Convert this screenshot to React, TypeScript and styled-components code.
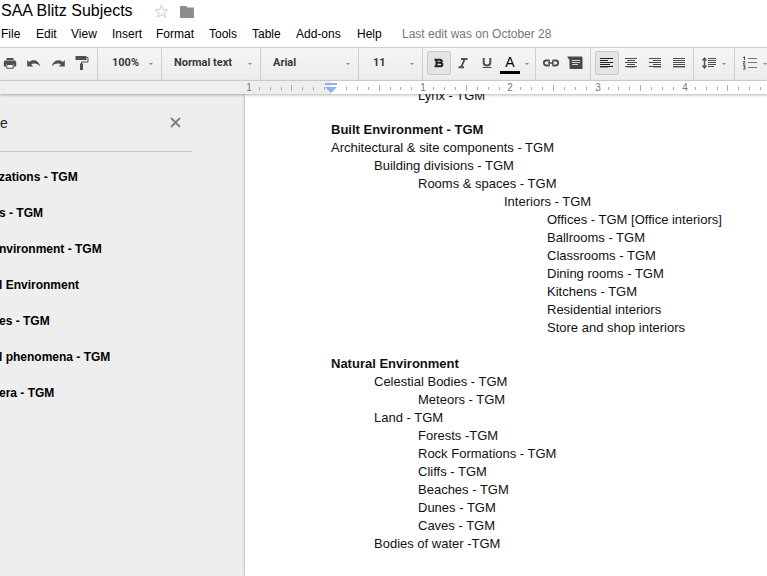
import React from "react";
import styled, { createGlobalStyle } from "styled-components";

const Global = createGlobalStyle`
  * { box-sizing: border-box; }
  body { margin: 0; background: #eee; color: #000; font-family: "Liberation Sans", Arial, sans-serif; }
  button { font: inherit; color: inherit; cursor: pointer; }
`;

const Shell = styled.div`
  height: 100vh;
  display: flex;
  flex-direction: column;
  overflow: hidden;
`;
const Header = styled.header`
  background: #fff;
  flex: none;
`;
const TitleRow = styled.div`
  display: flex;
  align-items: center;
  height: 22px;
  padding-left: 1px;
`;
const Title = styled.h1`
  margin: 0 21px 0 0;
  font-size: 16px;
  line-height: 20px;
  font-weight: 400;
  white-space: nowrap;
`;
const BareButton = styled.button`
  border: 0;
  padding: 0;
  background: none;
  display: flex;
  flex: none;
`;
const FolderButton = styled(BareButton)`
  margin-left: 11px;
`;
const MenuBar = styled.nav`
  display: flex;
  align-items: center;
  height: 25px;
  padding-bottom: 2px;
  font-size: 12px;
  line-height: 16px;
`;
const MenuItem = styled(BareButton)<{ $w: number }>`
  width: ${(p) => p.$w}px;
  padding-left: 1px;
`;
const LastEdit = styled.a`
  color: #777;
  text-decoration: none;
  white-space: nowrap;
`;
const Toolbar = styled.div`
  display: flex;
  align-items: stretch;
  flex: none;
  height: 34px;
  border-top: 1px solid #cfcfcf;
  border-bottom: 1px solid #d4d4d4;
  background: linear-gradient(#f6f6f6, #ececec);
  overflow: hidden;
`;
const Group = styled.div<{ $w: number; $pad?: number; $end?: boolean; $last?: boolean }>`
  display: flex;
  align-items: center;
  justify-content: ${(p) => (p.$end ? "flex-end" : "flex-start")};
  flex: none;
  width: ${(p) => p.$w}px;
  padding-left: ${(p) => p.$pad ?? 0}px;
  padding-right: ${(p) => (p.$end ? 3 : 0)}px;
  padding-bottom: 2px;
  border-right: ${(p) => (p.$last ? "0" : "1px solid #cfcfcf")};
`;
const Tool = styled(BareButton)<{ $on?: boolean }>`
  align-items: center;
  justify-content: center;
  width: 24px;
  height: 24px;
  border: 1px solid ${(p) => (p.$on ? "#c8c8c8" : "transparent")};
  border-radius: 2px;
  background: ${(p) => (p.$on ? "#e4e4e4" : "none")};
`;
const DropTool = styled(BareButton)`
  align-items: center;
  gap: 5px;
`;
const LetterTool = styled(DropTool)`
  margin-left: 1px;
`;
const Letter = styled.span`
  width: 20px;
  border-bottom: 3px solid #000;
  font-size: 14px;
  line-height: 18px;
  text-align: center;
`;
const Picker = styled(BareButton)`
  align-items: center;
  justify-content: space-between;
  flex: 1;
  padding-right: 8px;
  color: #3a3a3a;
  font-family: Roboto, sans-serif;
  font-size: 11px;
  line-height: 16px;
  font-weight: 700;
  white-space: nowrap;
`;
const Arrow = styled.span`
  margin-top: 2px;
  border: 2px solid transparent;
  border-top-color: #888;
  border-bottom: 0;
`;
const Ruler = styled.div`
  flex: none;
  height: 13px;
  overflow: hidden;
  background: #eee;
  box-shadow: 0 1px 3px rgba(0, 0, 0, 0.3);
  position: relative;
  z-index: 1;
`;
const RulerScale = styled.svg`
  display: block;
  width: 100%;
  height: 13px;
  font-size: 10px;
`;
const Body = styled.div`
  display: flex;
  flex: 1;
  min-height: 0;
`;
const Outline = styled.aside`
  width: 192px;
  flex: none;
  margin-right: 53px;
`;
const OutlineHead = styled.div`
  display: flex;
  align-items: center;
  justify-content: space-between;
  height: 58px;
  padding-right: 11px;
  border-bottom: 1px solid #c8c8c8;
`;
const OutlineTitle = styled.h2`
  margin: 0;
  color: #222;
  font-size: 14px;
  line-height: 18px;
  font-weight: 400;
`;
const OutlineList = styled.ul`
  margin: 0 0 0 -1px;
  padding: 7px 0 0;
  list-style: none;
`;
const OutlineLink = styled.a`
  display: block;
  color: #000;
  font-size: 12px;
  line-height: 36px;
  font-weight: 700;
  text-decoration: none;
  white-space: nowrap;
`;
const Page = styled.main`
  flex: 1;
  min-width: 0;
  overflow: hidden;
  background: #fff;
  box-shadow: 0 0 3px rgba(0, 0, 0, 0.35);
  padding-left: 86px;
`;
const Sheet = styled.div`
  margin-top: -7px;
`;
const indents = [0, 43, 87, 130, 173, 216];
const Line = styled.p<{ $level: number; $bold?: boolean }>`
  margin: 0;
  padding-left: ${(p) => indents[p.$level]}px;
  font-size: 13px;
  line-height: 18px;
  font-weight: ${(p) => (p.$bold ? 700 : 400)};
  white-space: nowrap;
  color: #111;
`;
const Section = styled.section`
  & + & {
    margin-top: 18px;
  }
  &:first-child + & {
    margin-top: 16px;
  }
`;

const menus: [string, number][] = [
  ["File", 35], ["Edit", 35], ["View", 41], ["Insert", 44], ["Format", 53],
  ["Tools", 43], ["Table", 44], ["Add-ons", 61], ["Help", 46],
];

const outline = [
  "zations - TGM", "s - TGM", "nvironment - TGM", "l Environment",
  "es - TGM", "l phenomena - TGM", "era - TGM",
];

const sections: [number, string, boolean?][][] = [
  [[2, "Lynx - TGM"]],
  [
    [0, "Built Environment - TGM", true],
    [0, "Architectural & site components - TGM"],
    [1, "Building divisions - TGM"],
    [2, "Rooms & spaces - TGM"],
    [4, "Interiors - TGM"],
    [5, "Offices - TGM [Office interiors]"],
    [5, "Ballrooms - TGM"],
    [5, "Classrooms - TGM"],
    [5, "Dining rooms - TGM"],
    [5, "Kitchens - TGM"],
    [5, "Residential interiors"],
    [5, "Store and shop interiors"],
  ],
  [
    [0, "Natural Environment", true],
    [1, "Celestial Bodies - TGM"],
    [2, "Meteors - TGM"],
    [1, "Land - TGM"],
    [2, "Forests -TGM"],
    [2, "Rock Formations - TGM"],
    [2, "Cliffs - TGM"],
    [2, "Beaches - TGM"],
    [2, "Dunes - TGM"],
    [2, "Caves - TGM"],
    [1, "Bodies of water -TGM"],
  ],
];

const INK = "#505050";

const Icon = ({ w = 16, h = 16, children }: { w?: number; h?: number; children: React.ReactNode }) => (
  <svg width={w} height={h} viewBox={`0 0 ${w} ${h}`} fill="none" aria-hidden="true">{children}</svg>
);

const PrintIcon = () => (
  <Icon>
    <path d="M4.5 3h7v2h-7z" fill={INK} />
    <path d="M3.500 5.500h9c1 0 1.700.7 1.700 1.700V11.500h-2.400V9H4.200v2.500H1.800V7.200c0-1 .7-1.700 1.700-1.700z" fill={INK} />
    <path d="M4.800 9.500h6.400v3.800H4.800z" fill="#f4f4f4" stroke={INK} />
  </Icon>
);
const undoPath = "M1.200 5v6.500h6L5.200 9.600c1.600-1.300 5.200-1.800 9 1.600C12.500 5 6.500 4 3.200 7z";
const UndoIcon = () => <Icon><path d={undoPath} fill={INK} /></Icon>;
const RedoIcon = () => <Icon><path d={undoPath} transform="matrix(-1 0 0 1 16 0)" fill={INK} /></Icon>;
const PaintIcon = () => (
  <Icon>
    <path d="M1.500 1h11v4h-11z" fill={INK} />
    <path d="M12.500 2.500h1.500v4.500H7.500V9" stroke={INK} />
    <path d="M6 8.500h3V15H6z" fill={INK} />
  </Icon>
);
const BoldIcon = () => (
  <Icon>
    <path d="M3.500 4.700h5.200c1.400 0 2 .6 2 1.500s-.7 1.600-2 1.600H6h3c1.500 0 2.300.7 2.300 1.700 0 1.200-.8 1.800-2.300 1.800H3.500M5.500 4v8" stroke="#222" strokeWidth="2.100" />
  </Icon>
);
const ItalicIcon = () => (
  <Icon><path d="M6 4h6.500M3.500 12.200H9M9.700 4 6.300 12" stroke={INK} strokeWidth="1.900" /></Icon>
);
const UnderlineIcon = () => (
  <Icon>
    <path d="M4.700 3v4.500c0 2 1.300 3 3.300 3s3.300-1 3.300-3V3" stroke={INK} strokeWidth="2" />
    <path d="M3.500 12.500h9" stroke={INK} />
  </Icon>
);
const LinkIcon = () => (
  <Icon w={18}>
    <path d="M7.500 5.500H4.300a2.500 2.500 0 0 0 0 5h3.200M10.500 5.500h3.200a2.500 2.500 0 0 1 0 5h-3.200" stroke={INK} strokeWidth="1.900" />
    <path d="M7.500 5.500v5M10.500 5.500v5" stroke={INK} />
    <path d="M6 8h6" stroke={INK} strokeWidth="1.500" />
  </Icon>
);
const CommentIcon = () => (
  <Icon>
    <path d="M0 1.500h14c1 0 1.500.5 1.500 1.500v11H4c-1 0-1.500-.5-1.500-1.500V5z" fill="#484848" />
    <path d="M5 5.500h8M5 7.500h8M5 9.500h6" stroke="#d4d4d4" />
  </Icon>
);
const alignRows = {
  left: [[1, 14], [1, 9], [1, 14], [1, 11], [1, 14], [1, 9]],
  center: [[2, 14], [4, 12], [2, 14], [4, 12], [2, 14], [4, 12]],
  right: [[2, 14], [6, 14], [2, 14], [6, 14], [2, 14], [6, 14]],
  justify: [[2, 14], [2, 14], [2, 14], [2, 14], [2, 14], [2, 14]],
};
const AlignIcon = ({ kind }: { kind: keyof typeof alignRows }) => (
  <Icon>
    {alignRows[kind].map(([a, b], i) => (
      <path
        key={i}
        d={`M${a} ${[3, 5, 7, 9, 11, 12][i] + 0.5}H${b}`}
        stroke={kind === "left" ? "#222" : "#4a4a4a"}
        opacity={i === 5 ? 0.4 : 1}
      />
    ))}
  </Icon>
);
const SpacingIcon = () => (
  <Icon>
    <path d="M3.500 4v9" stroke={INK} strokeWidth="1.400" />
    <path d="M3.500 2 6.300 5.500H.7zM3.500 14 6.300 10.500H.7z" fill={INK} />
    <path d="M7 3.500h8M7 5.500h8M7 7.500h8M7 9.500h8M7 11.500h6" stroke={INK} />
  </Icon>
);
const NumberIcon = () => (
  <Icon>
    <path d="M6 3.500h9M6 7.500h9M6 12.500h9" stroke="#777" />
    <path d="M1 2.500l1.500-.7V5M1 6.500h2l-2 2.500h2.500M1 10.800h2.200L2 12.300l1.200.4v1.400H1" stroke={INK} />
  </Icon>
);
const StarIcon = () => (
  <Icon w={15} h={15}>
    <path d="M7.500 1.200 9.100 5.600l4.700.2-3.700 2.900 1.300 4.500-3.900-2.600-3.900 2.600 1.300-4.500L1.200 5.800l4.700-.2z" stroke="#ccc" />
  </Icon>
);
const FolderIcon = () => (
  <Icon w={14} h={13}><path d="M0 1h6l1.500 1.500H14V13H0z" fill="#8d8d8d" /></Icon>
);
const CloseIcon = () => (
  <Icon w={11} h={11}><path d="m1 1 9 9M10 1l-9 9" stroke="#808080" strokeWidth="1.800" /></Icon>
);

const INCH = 87.2;
const ORIGIN = 336;
const LEFT_MARGIN = 331;

const RulerMarks = () => {
  const marks: React.ReactNode[] = [];
  for (let i = -8; i < 60; i++) {
    const x = Math.round(ORIGIN + (i * INCH) / 8);
    if (i % 8 !== 0) {
      marks.push(<path key={i} d={i % 4 === 0 ? `M${x - 0.5} 4v6` : `M${x - 0.5} 6v3`} stroke="#aaa" />);
    } else if (i !== 0) {
      marks.push(<text key={i} x={x} y="10" textAnchor="middle" fill="#777">{Math.abs(i / 8)}</text>);
    }
  }
  return <>{marks}</>;
};

export default function App() {
  return (
    <Shell>
      <Global />
      <Header>
        <TitleRow>
          <Title>SAA Blitz Subjects</Title>
          <BareButton aria-label="Star"><StarIcon /></BareButton>
          <FolderButton aria-label="Move to folder"><FolderIcon /></FolderButton>
        </TitleRow>
        <MenuBar>
          {menus.map(([m, w]) => <MenuItem key={m} $w={w}>{m}</MenuItem>)}
          <LastEdit href="#">Last edit was on October 28</LastEdit>
        </MenuBar>
      </Header>
      <Toolbar role="toolbar">
        <Group $w={98} $end>
          <Tool aria-label="Print"><PrintIcon /></Tool>
          <Tool aria-label="Undo"><UndoIcon /></Tool>
          <Tool aria-label="Redo"><RedoIcon /></Tool>
          <Tool aria-label="Paint format"><PaintIcon /></Tool>
        </Group>
        <Group $w={64} $pad={14}><Picker>100%<Arrow /></Picker></Group>
        <Group $w={99} $pad={12}><Picker>Normal text<Arrow /></Picker></Group>
        <Group $w={98} $pad={12}><Picker>Arial<Arrow /></Picker></Group>
        <Group $w={64} $pad={14}><Picker>11<Arrow /></Picker></Group>
        <Group $w={113} $pad={4}>
          <Tool $on aria-label="Bold" aria-pressed="true"><BoldIcon /></Tool>
          <Tool aria-label="Italic"><ItalicIcon /></Tool>
          <Tool aria-label="Underline"><UnderlineIcon /></Tool>
          <LetterTool aria-label="Text color"><Letter>A</Letter><Arrow /></LetterTool>
        </Group>
        <Group $w={55} $pad={3}>
          <Tool aria-label="Insert link"><LinkIcon /></Tool>
          <Tool aria-label="Add comment"><CommentIcon /></Tool>
        </Group>
        <Group $w={103} $pad={4}>
          <Tool $on aria-label="Left align" aria-pressed="true"><AlignIcon kind="left" /></Tool>
          <Tool aria-label="Center align"><AlignIcon kind="center" /></Tool>
          <Tool aria-label="Right align"><AlignIcon kind="right" /></Tool>
          <Tool aria-label="Justify"><AlignIcon kind="justify" /></Tool>
        </Group>
        <Group $w={41} $pad={7}><DropTool aria-label="Line spacing"><SpacingIcon /><Arrow /></DropTool></Group>
        <Group $w={36} $pad={7} $last><DropTool aria-label="Numbered list"><NumberIcon /><Arrow /></DropTool></Group>
      </Toolbar>
      <Ruler>
        <RulerScale>
          <rect x={LEFT_MARGIN} width="100%" height="13" fill="#fff" />
          <RulerMarks />
          <path d={`M${LEFT_MARGIN - 6} 2h12v2h-12zM${LEFT_MARGIN - 6} 6h12l-6 6z`} fill="#8fb0f2" />
        </RulerScale>
      </Ruler>
      <Body>
        <Outline>
          <OutlineHead>
            <OutlineTitle>e</OutlineTitle>
            <BareButton aria-label="Close outline"><CloseIcon /></BareButton>
          </OutlineHead>
          <OutlineList>
            {outline.map((o) => <li key={o}><OutlineLink href="#">{o}</OutlineLink></li>)}
          </OutlineList>
        </Outline>
        <Page>
          <Sheet>
            {sections.map((lines, s) => (
              <Section key={s}>
                {lines.map(([level, text, bold]) => <Line key={text} $level={level} $bold={bold}>{text}</Line>)}
              </Section>
            ))}
          </Sheet>
        </Page>
      </Body>
    </Shell>
  );
}
